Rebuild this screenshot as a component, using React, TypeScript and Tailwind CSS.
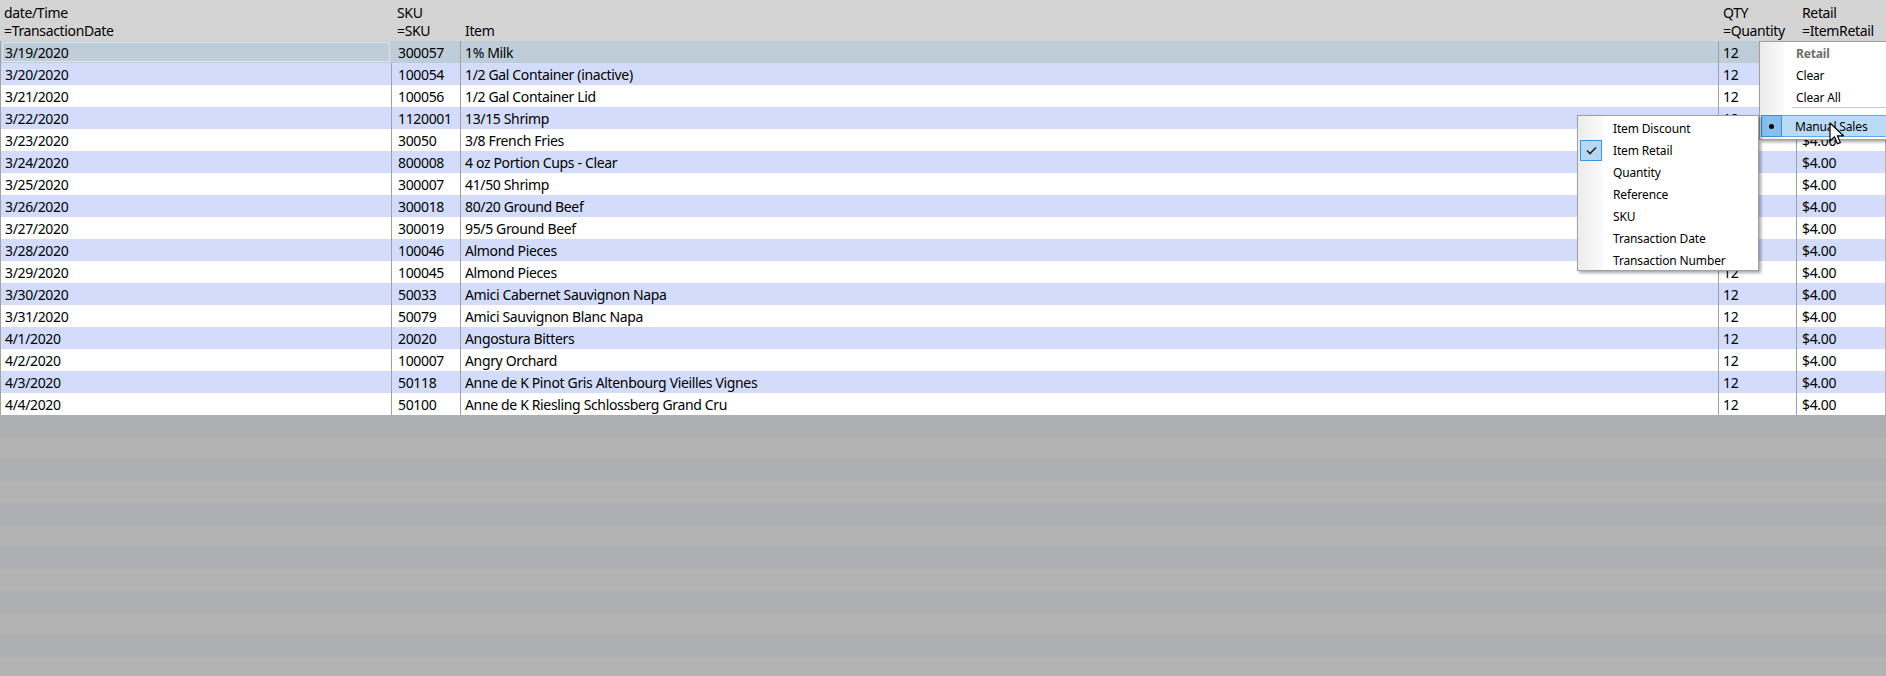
import React from "react";

const rows: [string, string, string][] = [
  ["3/19/2020", "300057", "1% Milk"],
  ["3/20/2020", "100054", "1/2 Gal Container (inactive)"],
  ["3/21/2020", "100056", "1/2 Gal Container Lid"],
  ["3/22/2020", "1120001", "13/15 Shrimp"],
  ["3/23/2020", "30050", "3/8 French Fries"],
  ["3/24/2020", "800008", "4 oz Portion Cups - Clear"],
  ["3/25/2020", "300007", "41/50 Shrimp"],
  ["3/26/2020", "300018", "80/20 Ground Beef"],
  ["3/27/2020", "300019", "95/5 Ground Beef"],
  ["3/28/2020", "100046", "Almond Pieces"],
  ["3/29/2020", "100045", "Almond Pieces"],
  ["3/30/2020", "50033", "Amici Cabernet Sauvignon Napa"],
  ["3/31/2020", "50079", "Amici Sauvignon Blanc Napa"],
  ["4/1/2020", "20020", "Angostura Bitters"],
  ["4/2/2020", "100007", "Angry Orchard"],
  ["4/3/2020", "50118", "Anne de K Pinot Gris Altenbourg Vieilles Vignes"],
  ["4/4/2020", "50100", "Anne de K Riesling Schlossberg Grand Cru"],
];

const stripes = Array.from({ length: 12 }, (_, i) => i);

const subItems = [
  "Item Discount",
  "Item Retail",
  "Quantity",
  "Reference",
  "SKU",
  "Transaction Date",
  "Transaction Number",
];

export default function App() {
  return (
    <div
      className="relative w-[1886px] h-[676px] overflow-hidden bg-[#b3b3b3] text-[14px] tracking-[-0.35px] text-black"
      style={{ fontFamily: '"Noto Sans", "Open Sans", sans-serif' }}
    >
      {/* Header */}
      <div className="flex h-[41px] bg-[#d4d4d4] leading-[18px]">
        <div className="w-[392px] pl-[4px] pt-[4px] flex flex-col">
          <span>date/Time</span>
          <span>=TransactionDate</span>
        </div>
        <div className="w-[68px] pl-[5px] pt-[4px] flex flex-col">
          <span>SKU</span>
          <span>=SKU</span>
        </div>
        <div className="w-[1258px] pl-[5px] pt-[4px] flex flex-col">
          <span>&nbsp;</span>
          <span>Item</span>
        </div>
        <div className="w-[78px] pl-[5px] pt-[4px] flex flex-col">
          <span>QTY</span>
          <span>=Quantity</span>
        </div>
        <div className="w-[89px] pl-[6px] pt-[4px] flex flex-col">
          <span>Retail</span>
          <span>=ItemRetail</span>
        </div>
      </div>

      {/* Rows */}
      <div className="w-[1885px] border-l border-[#a0a0a0]">
        {rows.map((r, i) => {
          const bg =
            i === 0 ? "bg-[#bfcdd9]" : i % 2 === 1 ? "bg-[#d3ddfb]" : "bg-white";
          return (
            <div key={i} className={`flex h-[22px] leading-[23px] ${bg}`}>
              <div className="relative w-[390px] pl-[4px]">
                {i === 0 && (
                  <div className="absolute inset-[1px] border border-[#dde4ec]" />
                )}
                <span className="relative">{r[0]}</span>
              </div>
              <div
                className={`w-[69px] pl-[6px] border-l ${
                  i === 0 ? "border-[#bfcdd9]" : "border-[#a0a0a0]"
                }`}
              >
                {r[1]}
              </div>
              <div className="w-[1258px] pl-[4px] border-l border-[#a0a0a0] whitespace-nowrap">
                {r[2]}
              </div>
              <div className="w-[78px] pl-[4px] border-l border-[#a0a0a0]">12</div>
              <div className="w-[89px] pl-[5px] border-l border-[#a0a0a0]">$4.00</div>
            </div>
          );
        })}
      </div>

      {/* Empty stripes */}
      <div className="flex flex-col">
        {stripes.map((s) => (
          <div
            key={s}
            className={`h-[22px] ${s % 2 === 0 ? "bg-[#aeafb2]" : "bg-[#b3b3b3]"}`}
          />
        ))}
      </div>

      {/* Right context menu */}
      <div className="absolute left-[1759px] top-[41px] w-[200px] h-[99px] bg-white border border-[#a0a0a0] shadow-[2px_2px_3px_rgba(0,0,0,0.35)] flex text-[12px] tracking-[-0.15px]">
        <div className="absolute left-0 top-0 bottom-0 w-[24px] bg-gradient-to-r from-[#ececec] to-[#fbfbfb]" />
        <div className="relative flex flex-col w-full">
          <div className="h-[22px] flex items-center pl-[36px] pt-[2px] font-bold text-[#6d6d6d]">Retail</div>
          <div className="h-[22px] flex items-center pl-[36px] pt-[2px]">Clear</div>
          <div className="h-[20px] flex items-center pl-[36px] pt-[3px]">Clear All</div>
          <div className="h-[9px] pl-[32px]">
            <div className="h-px bg-[#c8c8c8] mt-[1px]" />
          </div>
          <div className="h-[22px] ml-[1px] flex bg-[#b9dbf6] border border-[#5ea7e8]">
            <div className="w-[21px] -ml-px -mt-px h-[22px] bg-[#86bfec] border border-[#3d8ddb] flex items-center justify-center">
              <div className="w-[5px] h-[5px] rounded-full bg-black" />
            </div>
            <div className="flex items-center pl-[13px] pt-[1px] leading-none">Manual Sales</div>
          </div>
        </div>
      </div>

      {/* Submenu */}
      <div className="absolute left-[1577px] top-[115px] w-[182px] h-[156px] bg-white border border-[#a0a0a0] shadow-[2px_2px_3px_rgba(0,0,0,0.35)] text-[12px] tracking-[-0.15px]">
        <div className="absolute left-0 top-0 bottom-0 w-[25px] bg-gradient-to-r from-[#ececec] to-[#fbfbfb]" />
        <div className="relative flex flex-col pt-[1px]">
          {subItems.map((t, i) => (
            <div key={t} className="h-[22px] flex items-center">
              <div className="w-[35px] h-[22px] flex items-center pl-[2px]">
                {i === 1 && (
                  <div className="w-[22px] h-[21px] bg-[#b5d9f5] border border-[#3d95e0] flex items-center justify-center">
                    <svg width="11" height="9" viewBox="0 0 11 9">
                      <path d="M1 4.5 L4 7.5 L10 1.5" fill="none" stroke="#222" strokeWidth="1.6" />
                    </svg>
                  </div>
                )}
              </div>
              <span className="pt-[2px]">{t}</span>
            </div>
          ))}
        </div>
      </div>

      {/* Cursor */}
      <svg
        className="absolute left-[1829px] top-[122px]"
        width="16"
        height="24"
        viewBox="0 0 16 24"
      >
        <path
          d="M1 1 L1 19 L5.5 14.8 L8.5 21.8 L11.3 20.6 L8.4 13.8 L14.5 13.8 Z"
          fill="white"
          stroke="black"
          strokeWidth="1.2"
          strokeLinejoin="round"
        />
      </svg>
    </div>
  );
}
